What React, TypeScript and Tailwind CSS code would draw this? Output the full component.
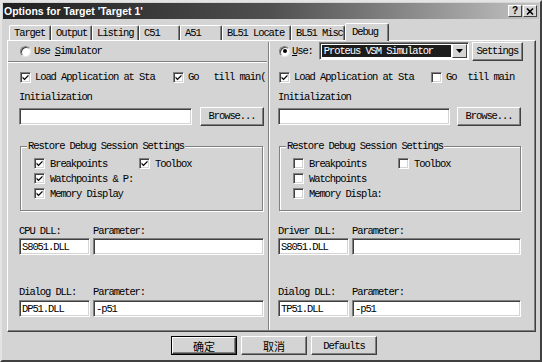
import React from "react";

const M = "[font-family:'Liberation_Mono',monospace] text-[10.5px] tracking-[-1.1px] leading-[12px] text-black whitespace-pre";

function CheckBox({ checked }: { checked?: boolean }) {
  return (
    <span className="w-[11px] h-[11px] shrink-0 bg-white border-t border-l border-b border-r border-t-[#808080] border-l-[#808080] border-b-white border-r-white shadow-[inset_1px_1px_0_#404040,inset_-1px_-1px_0_#d4d4d4] flex items-center justify-center">
      {checked && (
        <svg width="9" height="9" viewBox="0 0 9 9">
          <path d="M1.5 3.5 L3.5 5.5 L7.5 1.5 L7.5 3.2 L3.5 7.2 L1.5 5.2 Z" fill="#000" />
        </svg>
      )}
    </span>
  );
}

function Radio({ checked }: { checked?: boolean }) {
  return (
    <span className="w-[11px] h-[11px] shrink-0 rounded-full bg-white border border-t-[#808080] border-l-[#808080] border-b-[#e8e8e8] border-r-[#e8e8e8] shadow-[inset_1px_1px_0_#404040] flex items-center justify-center">
      {checked && <span className="w-[4px] h-[4px] rounded-full bg-black" />}
    </span>
  );
}

function Sunken({ w, children }: { w: string; children?: React.ReactNode }) {
  return (
    <div className={`${w} h-[17px] bg-white border-t border-l border-b border-r border-t-[#808080] border-l-[#808080] border-b-white border-r-white shadow-[inset_1px_1px_0_#404040,inset_-1px_-1px_0_#d4d4d4] flex items-center pl-[2px] ${M}`}>
      {children}
    </div>
  );
}

function Btn({ w, h, children, def, cjk }: { w: string; h: string; children: React.ReactNode; def?: boolean; cjk?: boolean }) {
  const inner = (
    <div className={`w-full h-full bg-[#d4d4d4] border-t border-l border-b border-r border-t-white border-l-white border-b-[#404040] border-r-[#404040] shadow-[inset_-1px_-1px_0_#808080] flex items-center justify-center ${cjk ? "[font-family:'Noto_Sans_CJK_SC',sans-serif] text-[11px] leading-[12px] text-black" : M}`}>
      {children}
    </div>
  );
  if (def) {
    return <div className={`${w} ${h} border border-black`}>{inner}</div>;
  }
  return <div className={`${w} ${h}`}>{inner}</div>;
}

function Label({ children, cls = "" }: { children: React.ReactNode; cls?: string }) {
  return <div className={`h-[12px] ${M} ${cls}`}>{children}</div>;
}

function Half({ right }: { right?: boolean }) {
  return (
    <div className="flex flex-col">
      {right ? (
        <div className="h-[20px] flex items-center">
          <span className="ml-[1px]"><Radio checked /></span>
          <span className={`ml-[2px] ${M}`}><span className="underline">U</span>se:</span>
          <div className="ml-[6px] w-[150px] h-[18px] bg-white border-t border-l border-b border-r border-t-[#808080] border-l-[#808080] border-b-white border-r-white shadow-[inset_1px_1px_0_#404040] flex items-stretch p-[1px]">
            <div className={`flex-1 bg-[#1c1c1c] ${M} !text-white flex items-center pl-[2px] m-[1px]`}>Proteus VSM Simulator</div>
            <div className="w-[15px] bg-[#d4d4d4] border-t border-l border-b border-r border-t-white border-l-white border-b-[#404040] border-r-[#404040] flex items-center justify-center">
              <svg width="7" height="4" viewBox="0 0 7 4"><path d="M0 0 H7 L3.5 4 Z" fill="#000" /></svg>
            </div>
          </div>
          <span className="ml-[3px]">
            <Btn w="w-[51px]" h="h-[19px]">Settings</Btn>
          </span>
        </div>
      ) : (
        <div className="h-[20px] flex items-center">
          <span className="ml-[1px]"><Radio /></span>
          <span className={`ml-[3px] ${M}`}>Use <span className="underline">S</span>imulator</span>
        </div>
      )}
      {right ? (
        <div className="h-[2px]" />
      ) : (
        <div className="h-[2px] -ml-[11px] mr-[1px] border-t border-t-[#808080] border-b border-b-white" />
      )}
      <div className="mt-[7px] h-[14px] flex items-center">
        <span className="ml-[1px]"><CheckBox checked /></span>
        <span className={`ml-[4px] w-[120px] ${M}`}>Load Application at Sta</span>
        <span className={right ? "ml-[17px]" : "ml-[18px]"}>
          <CheckBox checked={!right} />
        </span>
        <span className={`ml-[4px] ${M}`}>Go</span>
        <span className={`${right ? "ml-[11px]" : "ml-[15px]"} ${M}`}>{right ? "till main" : "till main("}</span>
      </div>
      <Label cls="mt-[7px]">Initialization</Label>
      <div className="mt-[4px] h-[18px] flex items-center">
        <Sunken w={right ? "w-[172px]" : "w-[173px]"} />
        <span className={right ? "ml-[7px]" : "ml-[8px]"}>
          <Btn w="w-[64px]" h="h-[19px]">Browse...</Btn>
        </span>
      </div>
      <fieldset className={`mt-[15px] ml-[1px] ${right ? "w-[242px]" : "w-[243px]"} border border-[#808080] shadow-[inset_1px_1px_0_white,1px_1px_0_white] px-[6px] pb-[9px]`}>
        <legend className={`px-[1px] bg-[#d4d4d4] ${M}`}>Restore Debug Session Settings</legend>
        <div className="pt-[4px] pl-[7px] flex flex-col">
          <div className="h-[15px] flex items-center">
            <CheckBox checked={!right} />
            <span className={`ml-[5px] w-[89px] ${M}`}>Breakpoints</span>
            <CheckBox checked={!right} />
            <span className={`ml-[5px] ${M}`}>Toolbox</span>
          </div>
          <div className="h-[15px] flex items-center">
            <CheckBox checked={!right} />
            <span className={`ml-[5px] ${M}`}>{right ? "Watchpoints" : "Watchpoints & P:"}</span>
          </div>
          <div className="h-[15px] flex items-center">
            <CheckBox checked={!right} />
            <span className={`ml-[5px] ${M}`}>{right ? "Memory Displa:" : "Memory Display"}</span>
          </div>
        </div>
      </fieldset>
      <div className="mt-[14px] flex">
        <Label cls="w-[74px]">{right ? "Driver DLL:" : "CPU DLL:"}</Label>
        <Label>Parameter:</Label>
      </div>
      <div className="mt-[1px] flex">
        <Sunken w="w-[71px]">S8051.DLL</Sunken>
        <span className="ml-[3px]">
          <Sunken w={right ? "w-[169px]" : "w-[171px]"} />
        </span>
      </div>
      <div className="mt-[31px] flex">
        <Label cls="w-[74px]">Dialog DLL:</Label>
        <Label>Parameter:</Label>
      </div>
      <div className="mt-[2px] flex">
        <Sunken w="w-[71px]">{right ? "TP51.DLL" : "DP51.DLL"}</Sunken>
        <span className="ml-[3px]">
          <Sunken w={right ? "w-[169px]" : "w-[171px]"}>-p51</Sunken>
        </span>
      </div>
    </div>
  );
}

const tabs: { label: string; cls: string }[] = [
  { label: "Target", cls: "w-[42px]" },
  { label: "Output", cls: "w-[41px]" },
  { label: "Listing", cls: "w-[47px]" },
  { label: "C51", cls: "w-[41px]" },
  { label: "A51", cls: "w-[42px]" },
  { label: "BL51 Locate", cls: "w-[69px]" },
  { label: "BL51 Misc", cls: "w-[54px]" },
];

export default function App() {
  return (
    <div className="w-[542px] h-[362px] bg-[#d4d4d4] border-2 border-t-[#e4e4e4] border-l-[#e4e4e4] border-b-[#404040] border-r-[#404040] p-[1px] flex flex-col overflow-hidden">
      <div className="h-[16px] shrink-0 bg-linear-to-r from-[#202020] via-[#505050] to-[#c4c4c4] flex items-center pl-[1px] pr-[2px]">
        <span className="[font-family:'Liberation_Sans',sans-serif] font-bold text-[10.5px] text-white leading-[12px] whitespace-pre">
          Options for Target 'Target 1'
        </span>
        <div className="ml-auto flex">
          <div className="w-[14px] h-[12px] bg-[#d4d4d4] border-t border-l border-b border-r border-t-white border-l-white border-b-[#404040] border-r-[#404040] flex items-center justify-center [font-family:'Liberation_Sans',sans-serif] font-bold text-[10px] leading-[10px] text-black">?</div>
          <div className="ml-[1px] w-[14px] h-[12px] bg-[#d4d4d4] border-t border-l border-b border-r border-t-white border-l-white border-b-[#404040] border-r-[#404040] flex items-center justify-center">
            <svg width="8" height="7" viewBox="0 0 8 7"><path d="M1 0.5 L7 6.5 M7 0.5 L1 6.5" stroke="#000" strokeWidth="1.6" /></svg>
          </div>
        </div>
      </div>
      <div className="h-[21px] shrink-0 flex items-end pl-[6px]">
        {tabs.map((t) => (
          <div
            key={t.label}
            className={`${t.cls} h-[15px] border-t border-l border-r border-t-white border-l-white border-r-[#404040] shadow-[inset_-1px_0_0_#808080] rounded-t-[2px] flex items-center pl-[4px] ${M}`}
          >
            {t.label}
          </div>
        ))}
        <div className={`relative z-10 w-[44px] h-[18px] -mb-[1px] bg-[#d4d4d4] border-t border-l border-r border-t-white border-l-white border-r-[#404040] shadow-[inset_-1px_0_0_#808080] rounded-t-[2px] flex items-start pt-[2px] pl-[6px] ${M}`}>
          Debug
        </div>
      </div>
      <div className="ml-[4px] w-[529px] h-[292px] shrink-0 border-t border-l border-b border-r border-t-white border-l-white border-b-[#404040] border-r-[#404040] shadow-[inset_-1px_-1px_0_#808080] flex">
        <div className="w-[260px] pl-[11px]">
          <Half />
        </div>
        <div className="w-[2px] my-[1px] border-l border-l-[#808080] border-r border-r-white" />
        <div className="pl-[8px]">
          <Half right />
        </div>
      </div>
      <div className="mt-[4px] flex pl-[168px]">
        <Btn w="w-[66px]" h="h-[19px]" def cjk>确定</Btn>
        <span className="ml-[4px]"><Btn w="w-[66px]" h="h-[19px]" cjk>取消</Btn></span>
        <span className="ml-[4px]"><Btn w="w-[66px]" h="h-[19px]">Defaults</Btn></span>
      </div>
    </div>
  );
}
